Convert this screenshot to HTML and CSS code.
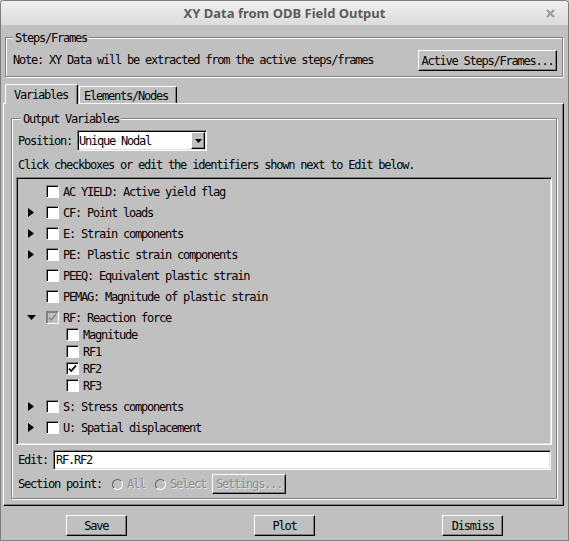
FILE: index.html
```html
<!DOCTYPE html>
<html>
<head>
<meta charset="utf-8">
<title>XY Data from ODB Field Output</title>
<link rel="stylesheet" href="styles.css">
</head>
<body>
<div class="window">
  <div class="titlebar">
    <span class="title">XY Data from ODB Field Output</span>
    <svg class="close" width="9" height="9" viewBox="0 0 9 9"><path d="M1 1L8 8M8 1L1 8" stroke="#9b9b9b" stroke-width="2"/></svg>
  </div>
  <div class="content">
    <fieldset class="group steps">
      <legend>Steps/Frames</legend>
      <div class="note-row">
        <span>Note: XY Data will be extracted from the active steps/frames</span>
        <button class="btn btn-steps">Active Steps/Frames...</button>
      </div>
    </fieldset>

    <div class="tabs">
      <div class="tab tab-active">Variables</div>
      <div class="tab tab-inactive">Elements/Nodes</div>
    </div>

    <div class="panel">
      <fieldset class="group output">
        <legend>Output Variables</legend>
        <div class="pos-row">
          <span>Position:</span>
          <div class="combo">
            <span class="combo-text">Unique Nodal</span>
            <span class="combo-btn"><svg width="7" height="4" viewBox="0 0 7 4"><path d="M0 0H7L3.5 4Z" fill="#000"/></svg></span>
          </div>
        </div>
        <div class="hint">Click checkboxes or edit the identifiers shown next to Edit below.</div>

        <div class="tree">
          <div class="row"><span class="twisty"></span><span class="cb"></span><span class="lbl">AC YIELD: Active yield flag</span></div>
          <div class="row"><span class="twisty"><svg width="6" height="9" viewBox="0 0 6 9"><path d="M0 0L6 4.5L0 9Z"/></svg></span><span class="cb"></span><span class="lbl">CF: Point loads</span></div>
          <div class="row"><span class="twisty"><svg width="6" height="9" viewBox="0 0 6 9"><path d="M0 0L6 4.5L0 9Z"/></svg></span><span class="cb"></span><span class="lbl">E: Strain components</span></div>
          <div class="row"><span class="twisty"><svg width="6" height="9" viewBox="0 0 6 9"><path d="M0 0L6 4.5L0 9Z"/></svg></span><span class="cb"></span><span class="lbl">PE: Plastic strain components</span></div>
          <div class="row"><span class="twisty"></span><span class="cb"></span><span class="lbl">PEEQ: Equivalent plastic strain</span></div>
          <div class="row"><span class="twisty"></span><span class="cb"></span><span class="lbl">PEMAG: Magnitude of plastic strain</span></div>
          <div class="row"><span class="twisty open"><svg width="9" height="5" viewBox="0 0 9 5"><path d="M0 0H9L4.5 5Z"/></svg></span><span class="cb cb-partial"><svg width="11" height="11" viewBox="0 0 11 11"><path d="M2 5.5L4.2 8L9 2.5" stroke="#8a8a8a" stroke-width="1.8" fill="none"/></svg></span><span class="lbl">RF: Reaction force</span></div>
          <div class="children">
            <div class="sub"><span class="cb"></span><span class="lbl">Magnitude</span></div>
            <div class="sub"><span class="cb"></span><span class="lbl">RF1</span></div>
            <div class="sub"><span class="cb"><svg width="11" height="11" viewBox="0 0 11 11"><path d="M2 5.5L4.2 8L9 2.5" stroke="#000" stroke-width="1.8" fill="none"/></svg></span><span class="lbl">RF2</span></div>
            <div class="sub"><span class="cb"></span><span class="lbl">RF3</span></div>
          </div>
          <div class="row"><span class="twisty"><svg width="6" height="9" viewBox="0 0 6 9"><path d="M0 0L6 4.5L0 9Z"/></svg></span><span class="cb"></span><span class="lbl">S: Stress components</span></div>
          <div class="row"><span class="twisty"><svg width="6" height="9" viewBox="0 0 6 9"><path d="M0 0L6 4.5L0 9Z"/></svg></span><span class="cb"></span><span class="lbl">U: Spatial displacement</span></div>
        </div>

        <div class="edit-row">
          <span>Edit:</span>
          <div class="field">RF.RF2</div>
        </div>

        <div class="sec-row">
          <span>Section point:</span>
          <span class="radio"></span><span class="dis">All</span>
          <span class="radio radio2"></span><span class="dis">Select</span>
          <button class="btn btn-settings dis">Settings...</button>
        </div>
      </fieldset>
    </div>

    <div class="actions">
      <button class="btn btn-act">Save</button>
      <button class="btn btn-act">Plot</button>
      <button class="btn btn-act">Dismiss</button>
    </div>
  </div>
</div>
</body>
</html>
```

FILE: styles.css
```css
* { box-sizing: border-box; }

html, body {
  margin: 0;
  padding: 0;
  background: #c0c0c0;
}

body {
  width: 569px;
  height: 541px;
  overflow: hidden;
  font-family: "DejaVu Sans Mono", "Liberation Mono", monospace;
  font-size: 12px;
  letter-spacing: -1.22px;
  color: #000;
}

.window {
  width: 569px;
  height: 541px;
  border: 1px solid #7c7c7c;
  border-radius: 4px 4px 0 0;
  background: #c0c0c0;
  display: flex;
  flex-direction: column;
  overflow: hidden;
}

.titlebar {
  flex: none;
  height: 24px;
  display: grid;
  grid-template-columns: 1fr auto 1fr;
  align-items: center;
  background: linear-gradient(#efefef, #dcdcdc);
}

.title {
  grid-column: 2;
  font-family: "Noto Sans", "DejaVu Sans", sans-serif;
  font-weight: bold;
  font-size: 13px;
  letter-spacing: 0;
  color: #5c5c5c;
}

.close {
  grid-column: 3;
  justify-self: end;
  margin-right: 13px;
}

.content {
  flex: 1;
  display: flex;
  flex-direction: column;
  padding: 6px 5px 0 4px;
}

/* etched group boxes */
fieldset.group {
  margin: 0;
  min-width: 0;
  border: 1px solid #808080;
  box-shadow: inset 1px 1px 0 #fff, 1px 1px 0 #fff;
}

fieldset.group legend {
  padding: 0 2px;
  height: 12px;
  line-height: 14px;
  background: #c0c0c0;
}

.steps {
  padding: 7px 5px 5px 7px;
}

.note-row {
  display: flex;
  align-items: center;
  justify-content: space-between;
  line-height: 14px;
}

.note-row > span {
  position: relative;
  top: -1px;
}

/* raised buttons */
.btn {
  font: inherit;
  letter-spacing: inherit;
  color: #000;
  background: #c0c0c0;
  margin: 0;
  padding: 0;
  border: 1px solid;
  border-color: #fff #000 #000 #fff;
  box-shadow: inset -1px -1px 0 #808080;
  border-radius: 0;
}

.btn-steps {
  width: 139px;
  height: 21px;
}

/* tabs */
.tabs {
  display: flex;
  align-items: flex-end;
  height: 19px;
  margin-top: 7px;
  position: relative;
  z-index: 1;
}

.tab {
  background: #c0c0c0;
  border-top: 1px solid #fff;
  border-left: 1px solid #fff;
  border-right: 1px solid #000;
  box-shadow: inset -1px 0 0 #808080;
  border-radius: 2px 2px 0 0;
  line-height: 16px;
  white-space: nowrap;
}

.tab-active {
  height: 20px;
  margin-bottom: -1px;
  padding: 2px 8px 0 8px;
  width: 73px;
}

.tab-inactive {
  height: 17px;
  margin-left: 1px;
  padding: 1px 6px 0 4px;
  width: 98px;
}

.panel {
  margin: 0 -1px 0 -2px;
  border-top: 1px solid #fff;
  border-left: 1px solid #fff;
  border-right: 1px solid #000;
  border-bottom: 1px solid #000;
  box-shadow: inset -1px -1px 0 #808080;
  padding: 8px 6px 6px 7px;
}

.output {
  padding: 6px 4px 4px 4px;
}

.output legend {
  margin-left: 5px;
}

.pos-row,
.edit-row,
.sec-row {
  display: flex;
  align-items: center;
  margin-left: 2px;
}

.combo {
  width: 130px;
  height: 21px;
  margin-left: 5px;
  display: flex;
  align-items: center;
  background: #fff;
  border: 1px solid;
  border-color: #808080 #fff #fff #808080;
  box-shadow: inset 1px 1px 0 #000, inset -1px -1px 0 #dfdfdf;
  padding-left: 1px;
}

.combo-text {
  flex: 1;
}

.combo-btn {
  width: 14px;
  height: 17px;
  margin-right: 1px;
  display: flex;
  align-items: center;
  justify-content: center;
  background: #c0c0c0;
  border: 1px solid;
  border-color: #fff #000 #000 #fff;
  box-shadow: inset -1px -1px 0 #808080;
}

.hint {
  margin: 8px 0 0 2px;
  height: 12px;
  line-height: 13px;
}

/* tree list */
.tree {
  margin-top: 6px;
  height: 268px;
  border: 1px solid;
  border-color: #808080 #fff #fff #808080;
  box-shadow: inset 1px 1px 0 #000, inset -1px -1px 0 #dfdfdf;
  padding: 3px 0 0 1px;
}

.row {
  height: 21px;
  display: flex;
  align-items: center;
  padding-left: 9px;
}

.twisty {
  width: 19px;
  display: flex;
  align-items: center;
}

.twisty svg {
  margin-left: 1px;
}

.twisty.open svg {
  margin-left: 0;
}

.cb {
  width: 13px;
  height: 13px;
  flex: none;
  background: #fff;
  border: 1px solid;
  border-color: #808080 #fff #fff #808080;
  box-shadow: inset 1px 1px 0 #000;
  display: flex;
}

.cb svg {
  display: block;
}

.cb-partial {
  background: #c0c0c0;
  box-shadow: inset 1px 1px 0 #808080;
}

.lbl {
  margin-left: 4px;
  white-space: nowrap;
  line-height: 14px;
}

.children {
  margin: -2px 0 2px 0;
}

.sub {
  height: 17px;
  display: flex;
  align-items: center;
  padding-left: 48px;
}

.edit-row {
  margin-top: 5px;
}

.field {
  flex: 1;
  height: 20px;
  margin: 0 1px 0 5px;
  background: #fff;
  border: 1px solid;
  border-color: #808080 #fff #fff #808080;
  box-shadow: inset 1px 1px 0 #000, inset -1px -1px 0 #dfdfdf;
  padding-left: 2px;
  line-height: 18px;
}

.sec-row {
  margin-top: 4px;
  height: 20px;
}

.radio {
  width: 11px;
  height: 11px;
  border-radius: 50%;
  border: 1px solid;
  border-color: #606060 #fff #fff #606060;
  margin-left: 10px;
  flex: none;
}

.radio + .dis {
  margin-left: 4px;
}

.dis {
  color: #8e8e8e;
  text-shadow: 1px 1px 0 #e2e2e2;
}

.btn-settings {
  width: 74px;
  height: 20px;
  margin-left: 6px;
}

.actions {
  display: flex;
  justify-content: space-around;
  margin-top: 9px;
  margin-left: -3px;
  margin-right: -4px;
}

.btn-act {
  width: 61px;
  height: 21px;
}
```
